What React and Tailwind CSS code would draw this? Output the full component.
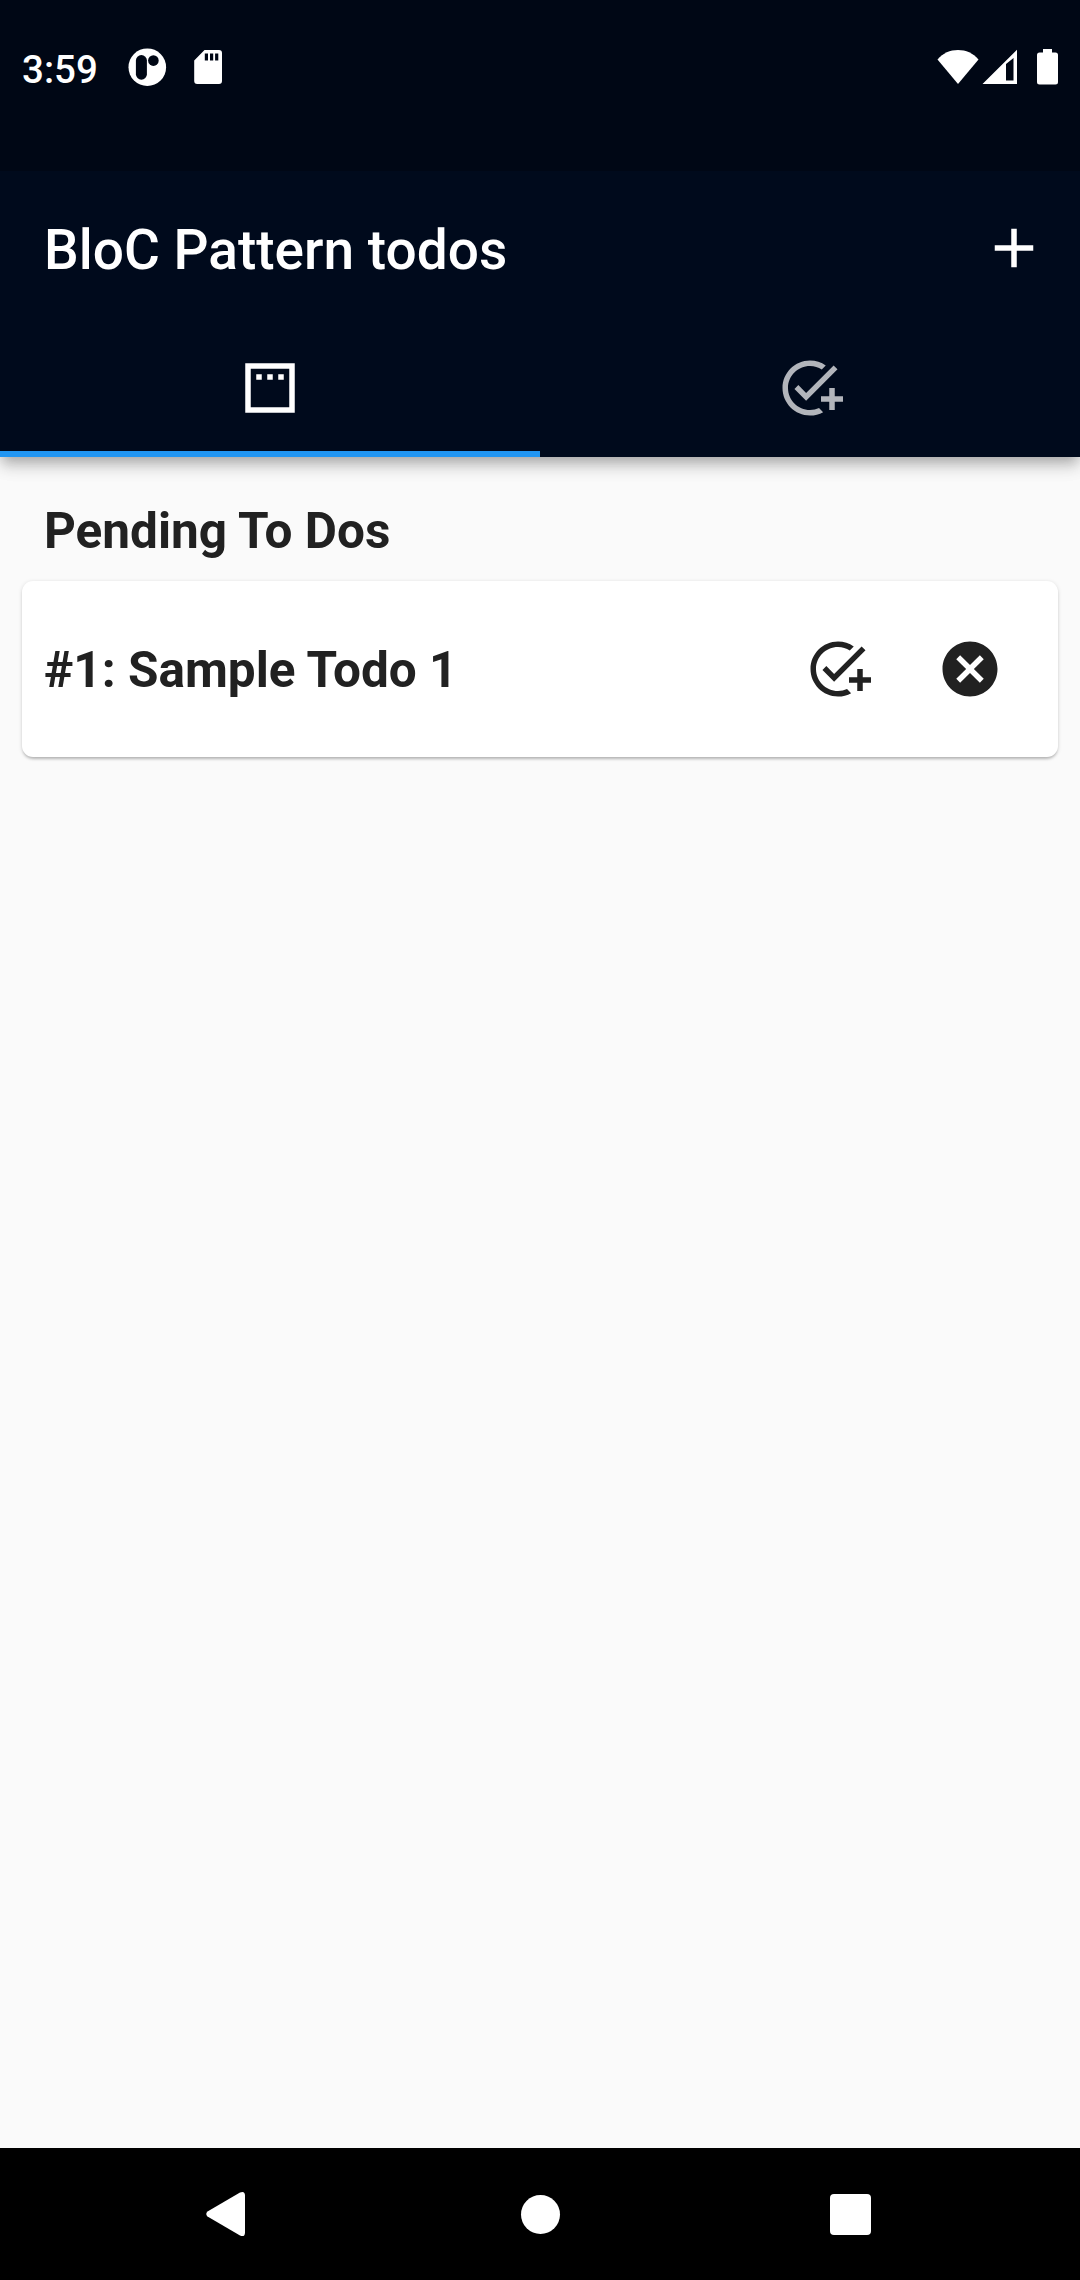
const ADD_TASK =
  "M22 5.18L10.59 16.6l-4.24-4.24 1.41-1.41 2.83 2.83 10-10L22 5.18zM12 20c-4.41 0-8-3.59-8-8s3.59-8 8-8c1.57 0 3.04.46 4.28 1.25l1.45-1.45C16.1 2.67 14.13 2 12 2 6.48 2 2 6.48 2 12s4.48 10 10 10c1.73 0 3.36-.44 4.78-1.22l-1.5-1.5c-1 .46-2.11.72-3.28.72zm7-5h-3v2h3v3h2v-3h3v-2h-3v-3h-2v3z";
const CANCEL =
  "M12 2C6.47 2 2 6.47 2 12s4.47 10 10 10 10-4.47 10-10S17.53 2 12 2zm5 13.59L15.59 17 12 13.41 8.41 17 7 15.59 10.59 12 7 8.41 8.41 7 12 10.59 15.59 7 17 8.41 13.41 12 17 15.59z";
const CALENDAR =
  "M3 3h18v18H3V3zm2 2v14h14V5H5zm2 2h2v2H7V7zm4 0h2v2h-2V7zm4 0h2v2h-2V7z";
const ADD = "M19 13h-6v6h-2v-6H5v-2h6V5h2v6h6v2z";

function Icon({ path, className = "" }) {
  return (
    <svg viewBox="0 0 24 24" fillRule="evenodd" className={`size-[66px] shrink-0 fill-current ${className}`}>
      <path d={path} />
    </svg>
  );
}

function StatusBar() {
  return (
    <div className="flex h-[171px] items-start justify-between bg-[#000715] px-[22px] pt-12 text-white">
      <div className="flex h-10 items-center">
        <span className="w-[106px] pt-[3px] text-[38.5px] font-medium leading-[42px]">3:59</span>
        <svg viewBox="0 0 38 38" className="size-[38px] overflow-visible">
          <circle cx="19.3" cy="18.2" r="18.8" fill="#fff" />
          <rect x="7.9" y="6.1" width="11" height="24.600" rx="5.500" fill="#000715" />
          <circle cx="25.4" cy="11.600" r="5.300" fill="#000715" />
        </svg>
        <svg viewBox="0 0 28 36" className="mb-[2px] ml-7 h-9 w-7">
          <path
            fill="#fff"
            fillRule="evenodd"
            d="M10.5 1H25a3 3 0 0 1 3 3v28a3 3 0 0 1-3 3H3.200a3 3 0 0 1-3-3V11.500zM10.800 4.500v7h3.200v-7zm5.200 0v7h3.200v-7zm5.100 0v7h3.200v-7z"
          />
        </svg>
      </div>
      <div className="flex h-[38px] items-center">
        <svg viewBox="0 0 42 36" className="h-9 w-[42px] fill-white">
          <path d="M.5 10.500C6 4 13 1 21 1s15 3 20.500 9.500L21 35z" />
        </svg>
        <svg viewBox="0 0 35 36" className="ml-[3px] h-9 w-[35px] fill-white">
          <path fillRule="evenodd" d="M.5 35L35 .8V35zM24 15v16.500h7.500V9z" />
        </svg>
        <svg viewBox="0 0 21 36" className="ml-5 h-9 w-[21px] fill-white">
          <path d="M6 0h9v3.500h3.500A2.500 2.500 0 0 1 21 6v27a2.500 2.500 0 0 1-2.500 2.500h-16A2.500 2.500 0 0 1 0 33V6a2.500 2.500 0 0 1 2.500-2.500H6z" />
        </svg>
      </div>
    </div>
  );
}

function AppBar() {
  return (
    <header className="relative z-10 bg-[#000a1c] text-white shadow-[0_5.5px_11px_-2.75px_rgba(0,0,0,0.2),0_11px_13.75px_0_rgba(0,0,0,0.12),0_2.75px_24px_0_rgba(0,0,0,0.1)]">
      <StatusBar />
      <div className="flex h-[154px] items-center justify-between pl-11 pr-[33px]">
        <h1 className="pt-[3px] text-[55px] font-medium leading-[64px]">BloC Pattern todos</h1>
        <Icon path={ADD} />
      </div>
      <div className="grid h-[132px] grid-cols-2">
        <div className="flex h-full items-center justify-center border-b-6 border-[#2196f3]">
          <Icon path={CALENDAR} />
        </div>
        <div className="flex h-full items-center justify-center pb-[6px]">
          <Icon path={ADD_TASK} className="text-[#b2b5bb]" />
        </div>
      </div>
    </header>
  );
}

function TodoCard({ title }) {
  return (
    <div className="mx-[22px] flex h-[176px] items-center rounded-[11px] bg-white pl-[22px] pr-[55px] shadow-[0_2.75px_2.75px_-1px_rgba(0,0,0,0.2),0_1px_4px_0_rgba(0,0,0,0.14)]">
      <span className="flex-1 pt-px text-[49.5px] font-bold leading-[58px]">{title}</span>
      <Icon path={ADD_TASK} />
      <Icon path={CANCEL} className="ml-[66px]" />
    </div>
  );
}

function NavigationBar() {
  return (
    <nav className="flex h-[132px] items-center bg-black">
      <svg viewBox="0 0 40 46" className="ml-[206px] h-[46px] w-10 fill-white">
        <path d="M1.500 20.500L34 1.400Q39 -.5 39 4.500V41.500Q39 46.500 34 44.600L1.500 25.500Q-1 23 1.500 20.500z" />
      </svg>
      <div className="ml-[275px] size-[39px] rounded-full bg-white" />
      <div className="ml-[270px] size-[41px] rounded-[4px] bg-white" />
    </nav>
  );
}

export default function App() {
  return (
    <div className="flex h-[2280px] w-[1080px] flex-col overflow-hidden bg-[#fafafa] font-[Roboto,sans-serif] text-[#212121]">
      <AppBar />
      <main className="flex-1">
        <h2 className="ml-11 mt-[45px] text-[49.5px] font-bold leading-[58px]">Pending To Dos</h2>
        <div className="mt-[21px]">
          <TodoCard title="#1: Sample Todo 1" />
        </div>
      </main>
      <NavigationBar />
    </div>
  );
}
